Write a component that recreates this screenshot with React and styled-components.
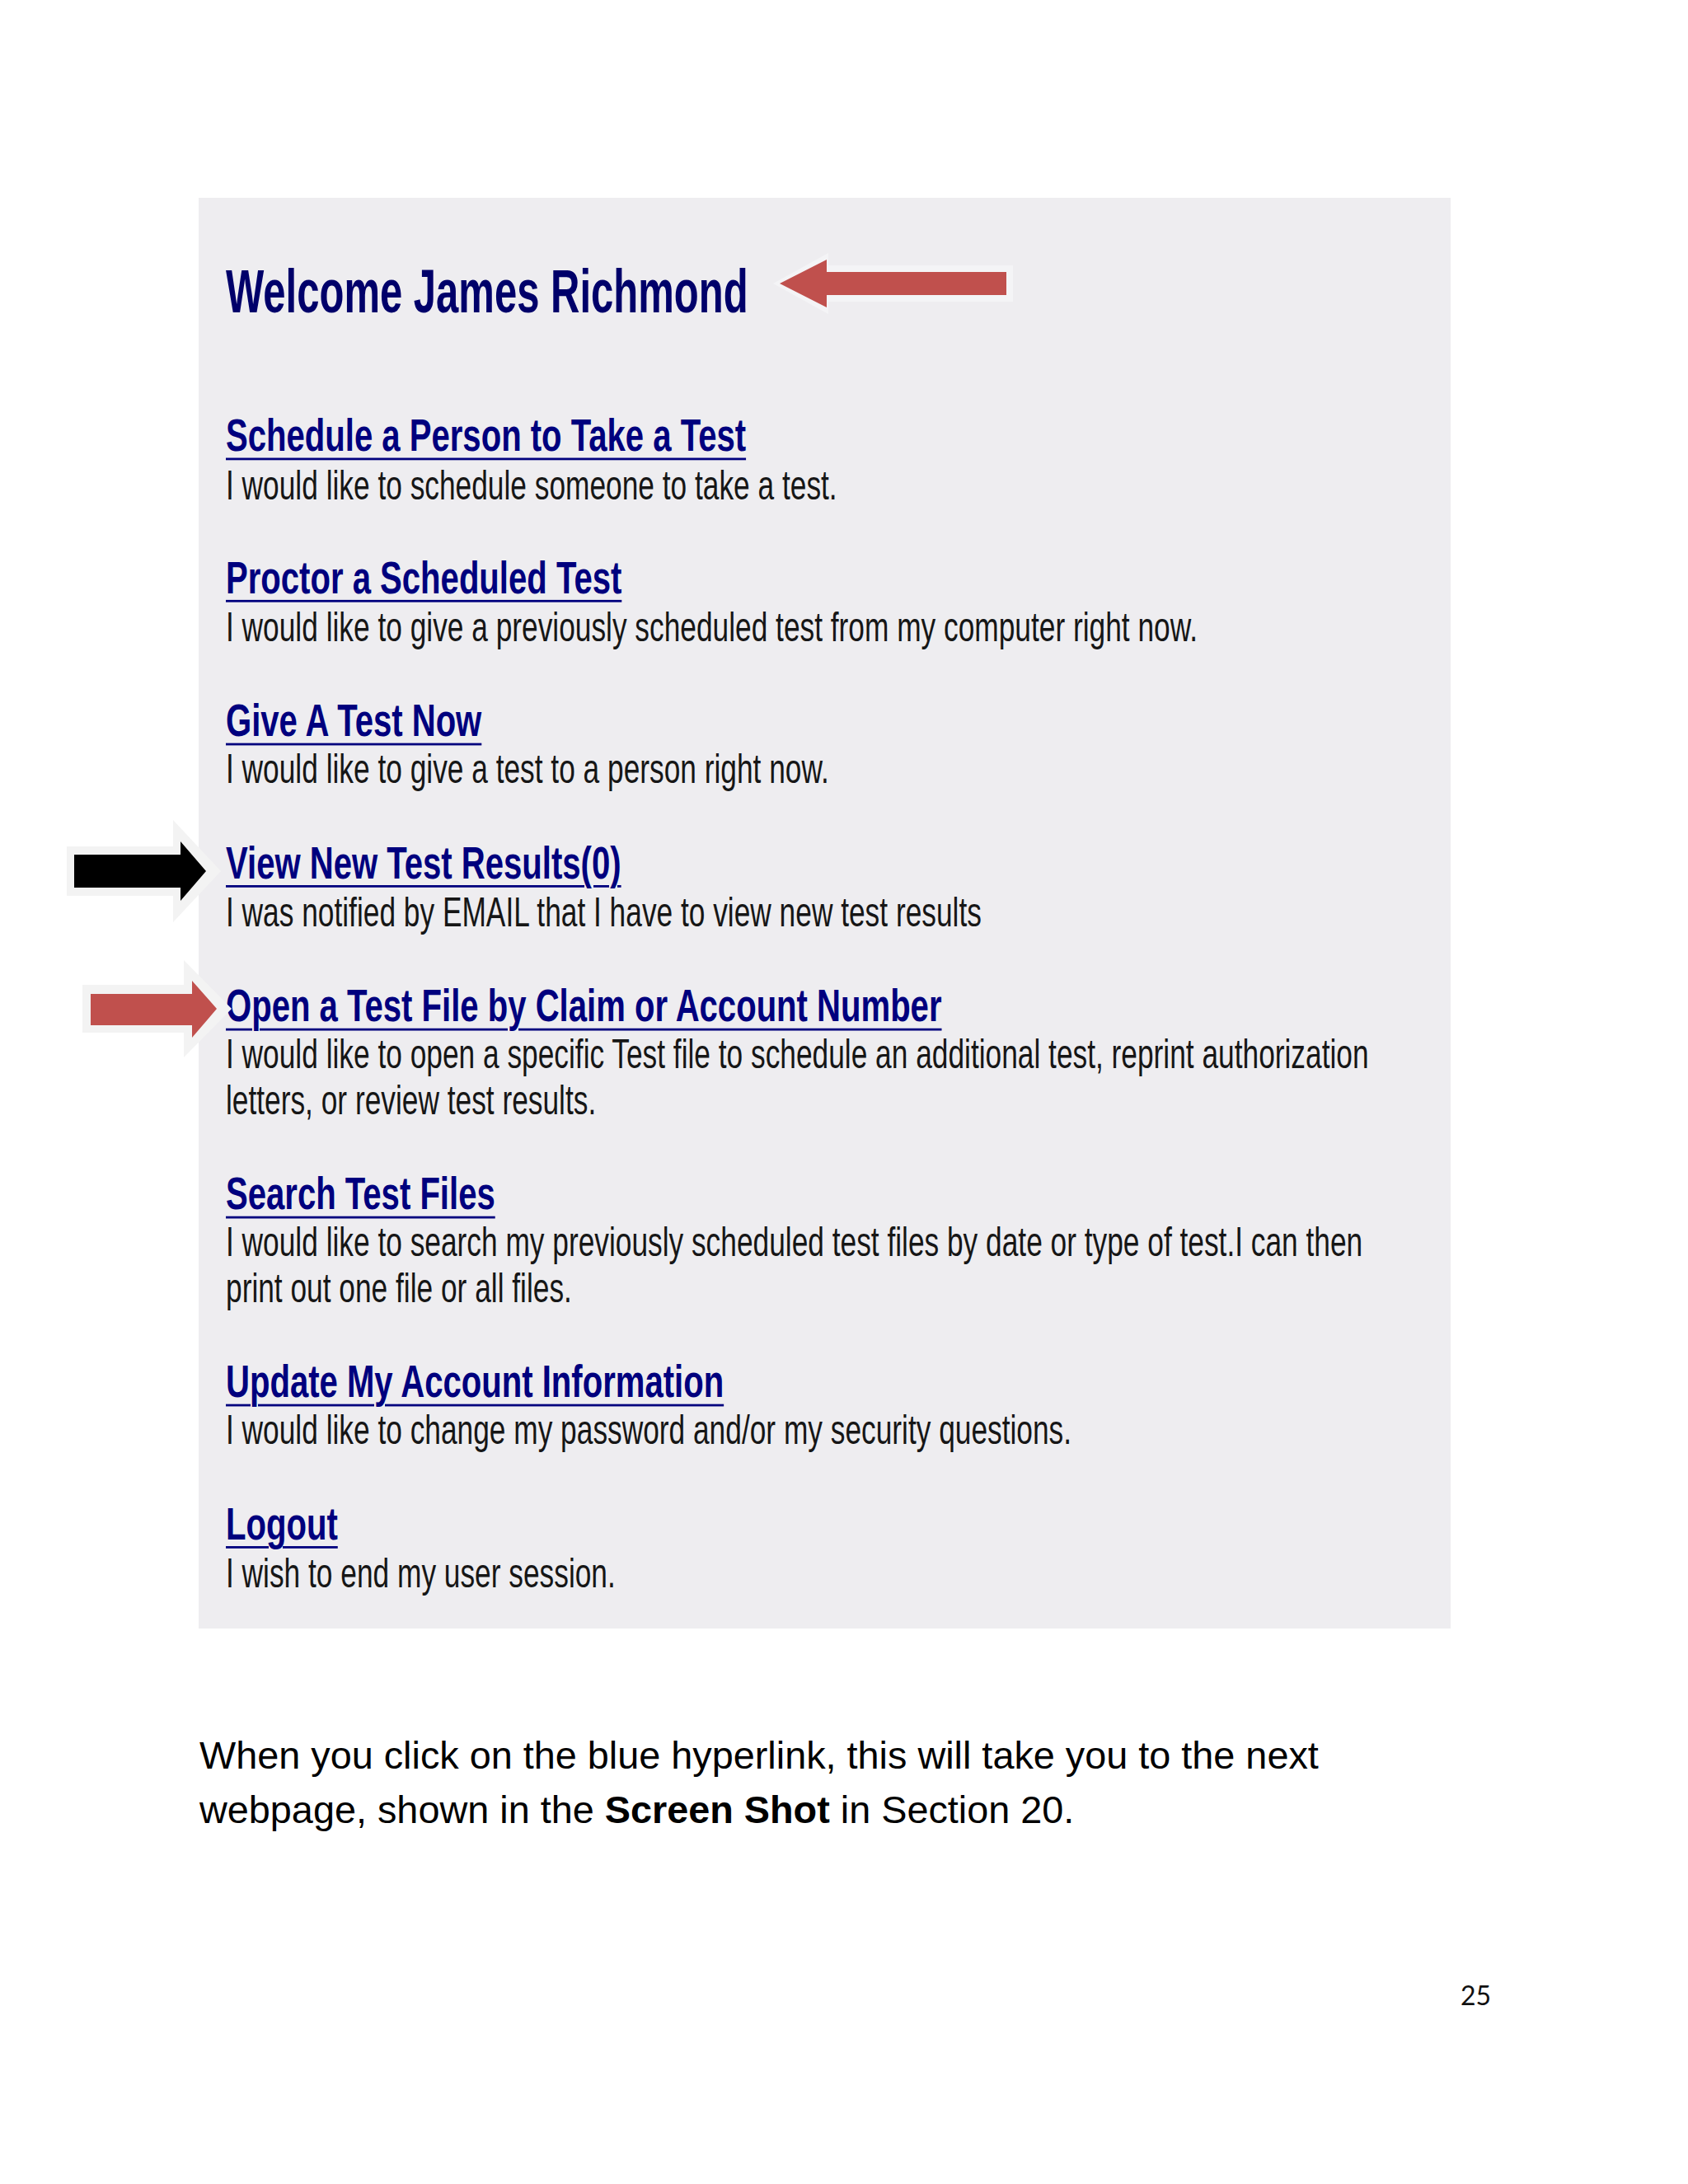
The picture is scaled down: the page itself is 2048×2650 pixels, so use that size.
import React from 'react'
import styled, { createGlobalStyle } from 'styled-components'

// the screenshot in the document is stretched vertically
const STRETCH = 1.39

const menu = [
	{
		title: 'Schedule a Person to Take a Test',
		note: 'I would like to schedule someone to take a test.',
	},
	{
		title: 'Proctor a Scheduled Test',
		note: 'I would like to give a previously scheduled test from my computer right now.',
	},
	{
		title: 'Give A Test Now',
		note: 'I would like to give a test to a person right now.',
	},
	{
		title: 'View New Test Results(0)',
		note: 'I was notified by EMAIL that I have to view new test results',
	},
	{
		title: 'Open a Test File by Claim or Account Number',
		note: 'I would like to open a specific Test file to schedule an additional test, reprint authorization letters, or review test results.',
	},
	{
		title: 'Search Test Files',
		note: 'I would like to search my previously scheduled test files by date or type of test.I can then print out one file or all files.',
	},
	{
		title: 'Update My Account Information',
		note: 'I would like to change my password and/or my security questions.',
	},
	{
		title: 'Logout',
		note: 'I wish to end my user session.',
	},
]

const GlobalStyle = createGlobalStyle`
	html, body {
		margin: 0;
		padding: 0;
		background: #ffffff;
	}

	body {
		font-family: 'Liberation Sans', Arial, sans-serif;
	}
`

const Page = styled.div`
	position: relative;
	box-sizing: border-box;
	width: 2048px;
	height: 2650px;
	padding: 240px 0 0 241px;
	display: flex;
	flex-direction: column;
	background: #ffffff;
`

const Shot = styled.div`
	flex-shrink: 0;
	width: 1519px;
	height: 1736px;
	overflow: hidden;
	background: #eeedf0;
`

const Sheet = styled.div`
	display: flex;
	flex-direction: column;
	align-items: flex-start;
	padding: 55px 0 0 33px;
	transform: scaleY(${STRETCH});
	transform-origin: 0 0;
`

const Welcome = styled.h1`
	margin: 0 0 74px;
	font-size: 49px;
	line-height: 56px;
	font-weight: 700;
	color: #00006a;
	transform: scaleY(1.086);
	transform-origin: 0 45px;
`

const Menu = styled.div`
	display: flex;
	flex-direction: column;
	gap: 39.26px;
`

const Item = styled.div`
	display: flex;
	flex-direction: column;
	align-items: flex-start;
	gap: 1.6px;
`

const ItemLink = styled.a`
	font-size: 40.1px;
	line-height: 44px;
	font-weight: 700;
	color: #00007e;
	text-decoration: underline;
	text-decoration-thickness: 2.2px;
	text-underline-offset: 6px;
	cursor: pointer;
`

const ItemNote = styled.p`
	margin: 0;
	max-width: 1435px;
	font-size: 35.3px;
	line-height: 39.6px;
	color: #161616;
`

const Caption = styled.p`
	margin: 121px 0 0 1px;
	font-size: 46.8px;
	line-height: 66px;
	color: #000000;

	b {
		font-weight: 700;
	}
`

const PageNumber = styled.div`
	margin: 172px 0 0 1531px;
	font-family: Lato, 'Open Sans', sans-serif;
	font-size: 32px;
	line-height: 40px;
	color: #111111;
`

const Annotations = styled.svg`
	position: absolute;
	left: 0;
	top: 0;
	pointer-events: none;
`

const App = () => {
	return (
		<>
			<GlobalStyle />

			<Page>
				<Shot>
					<Sheet>
						<Welcome>Welcome James Richmond</Welcome>
						<Menu>
							{menu.map(item => (
								<Item key={item.title}>
									<ItemLink>{item.title}</ItemLink>
									<ItemNote>{item.note}</ItemNote>
								</Item>
							))}
						</Menu>
					</Sheet>
				</Shot>

				<Caption>
					When you click on the blue hyperlink, this will take you to the next
					<br />
					webpage, shown in the <b>Screen Shot</b> in Section 20.
				</Caption>

				<PageNumber>25</PageNumber>

				<Annotations width="2048" height="2650" viewBox="0 0 2048 2650">
					{/* arrow next to the greeting */}
					<polygon
						points="938,344 1005,307 1005,322 1229,322 1229,366 1005,366 1005,381"
						fill="#f4f4f6"
					/>
					<polygon
						points="946,344 1003,315 1003,330 1221,330 1221,358 1003,358 1003,373"
						fill="#c0504d"
					/>

					{/* black arrow at the results link */}
					<polygon
						points="81,1027 210,1027 210,995 268,1057 210,1119 210,1087 81,1087"
						fill="#f3f3f3"
					/>
					<polygon
						points="90,1037 219,1037 219,1021 250,1057 219,1093 219,1077 90,1077"
						fill="#000000"
					/>

					{/* red arrow at the claim link */}
					<polygon
						points="100,1195 223,1195 223,1165 281,1224 223,1283 223,1253 100,1253"
						fill="#f3f3f3"
					/>
					<polygon
						points="110,1206 233,1206 233,1190 263,1224 233,1259 233,1244 110,1244"
						fill="#c0504d"
					/>
				</Annotations>
			</Page>
		</>
	)
}

export default App
